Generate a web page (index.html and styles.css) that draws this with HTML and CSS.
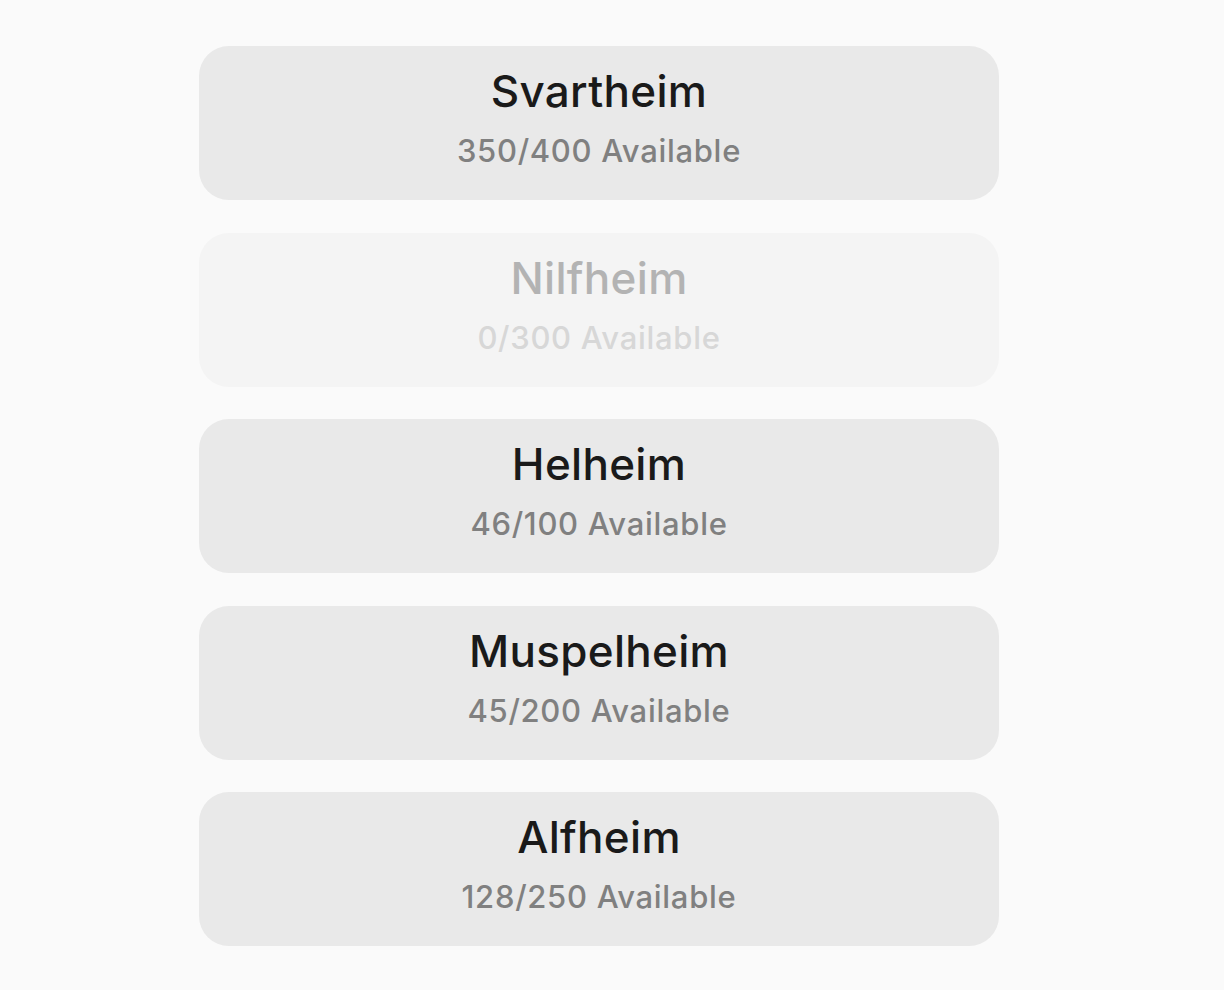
FILE: index.html
```html
<!DOCTYPE html>
<html lang="en">
<head>
<meta charset="utf-8">
<title>Realms</title>
<link rel="stylesheet" href="styles.css">
</head>
<body>
<main class="list">
  <button class="realm">
    <span class="realm-name">Svartheim</span>
    <span class="realm-count">350/400 Available</span>
  </button>
  <button class="realm realm-disabled" disabled>
    <span class="realm-name">Nilfheim</span>
    <span class="realm-count">0/300 Available</span>
  </button>
  <button class="realm">
    <span class="realm-name">Helheim</span>
    <span class="realm-count">46/100 Available</span>
  </button>
  <button class="realm">
    <span class="realm-name">Muspelheim</span>
    <span class="realm-count">45/200 Available</span>
  </button>
  <button class="realm">
    <span class="realm-name">Alfheim</span>
    <span class="realm-count">128/250 Available</span>
  </button>
</main>
</body>
</html>
```
FILE: styles.css
```css
html, body {
  margin: 0;
  padding: 0;
  background: #fafafa;
  font-family: Inter, "Liberation Sans", sans-serif;
}

.list {
  width: 800px;
  margin: 46px 0 0 199px;
  display: flex;
  flex-direction: column;
  gap: 32.5px;
}

.realm {
  display: flex;
  flex-direction: column;
  align-items: center;
  gap: 14px;
  padding: 19px 24px 29px;
  height: 154px;
  box-sizing: border-box;
  border: none;
  border-radius: 30px;
  background: #e9e9e9;
  font-family: inherit;
  cursor: pointer;
}

.realm-name {
  font-size: 44px;
  line-height: 52px;
  font-weight: 500;
  letter-spacing: 0.3px;
  color: #1a1a1a;
}

.realm-count {
  font-size: 31px;
  line-height: 40px;
  font-weight: 500;
  letter-spacing: 0.7px;
  color: #808080;
}

.realm-disabled {
  background: #f4f4f4;
  cursor: default;
}

.realm-disabled .realm-name {
  color: #b3b3b3;
}

.realm-disabled .realm-count {
  color: #d7d7d7;
}
```
